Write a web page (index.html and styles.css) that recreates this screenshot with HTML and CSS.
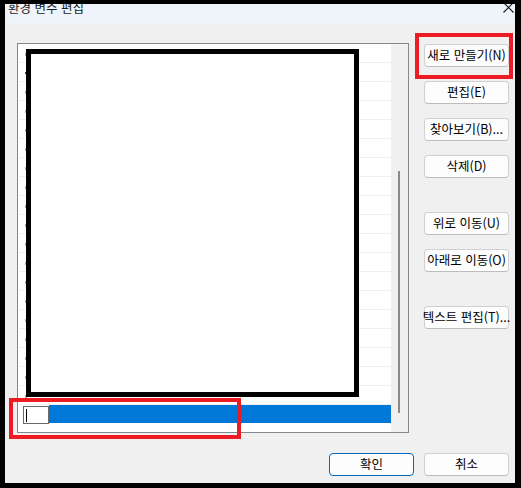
FILE: index.html
```html
<!DOCTYPE html>
<html lang="ko">
<head>
<meta charset="utf-8">
<title>환경 변수 편집</title>
<link rel="stylesheet" href="styles.css">
</head>
<body>
<div class="frame">
  <div class="dialog">
    <div class="titlebar">
      <span class="title">환경 변수 편집</span>
      <svg class="close" width="11" height="11" viewBox="0 0 11 11"><path d="M0.5 0.5 L10.5 10.5 M10.5 0.5 L0.5 10.5" stroke="#1a1a1a" stroke-width="1.1" fill="none"/></svg>
    </div>
    <div class="content">
      <div class="main">
        <div class="listbox">
          <div class="rows">
            <div class="row"><span class="tick"></span></div>
            <div class="row"><span class="tick tick-dark"></span></div>
            <div class="row"><span class="tick"></span></div>
            <div class="row"><span class="tick"></span></div>
            <div class="row"><span class="tick"></span></div>
            <div class="row"><span class="tick"></span></div>
            <div class="row"><span class="tick"></span></div>
            <div class="row"><span class="tick"></span></div>
            <div class="row"><span class="tick"></span></div>
            <div class="row"><span class="tick"></span></div>
            <div class="row"><span class="tick"></span></div>
            <div class="row"><span class="tick"></span></div>
            <div class="row"><span class="tick"></span></div>
            <div class="row"><span class="tick"></span></div>
            <div class="row"><span class="tick"></span></div>
            <div class="row"><span class="tick"></span></div>
            <div class="row"><span class="tick"></span></div>
            <div class="row"><span class="tick"></span></div>
            <div class="row"><span class="tick"></span></div>
            <div class="row row-selected">
              <div class="editbox"><span class="caret"></span></div>
              <div class="selfill"></div>
            </div>
          </div>
          <div class="vscroll"><div class="thumb"></div></div>
        </div>
        <div class="actions">
          <button class="btn">새로 만들기(N)</button>
          <button class="btn">편집(E)</button>
          <button class="btn">찾아보기(B)...</button>
          <button class="btn">삭제(D)</button>
          <button class="btn btn-spaced">위로 이동(U)</button>
          <button class="btn">아래로 이동(O)</button>
          <button class="btn btn-spaced">텍스트 편집(T)...</button>
        </div>
      </div>
      <div class="footer">
        <button class="btn btn-primary">확인</button>
        <button class="btn">취소</button>
      </div>
    </div>
  </div>
</div>
<div class="redact"></div>
<div class="hl hl-new"></div>
<div class="hl hl-edit"></div>
</body>
</html>
```

FILE: styles.css
```css
* { box-sizing: border-box; }
html, body { margin: 0; padding: 0; }
body {
  width: 521px;
  height: 488px;
  background: #000;
  font-family: "Noto Sans CJK KR", "Noto Sans", sans-serif;
  font-size: 12.5px;
  color: #000;
  position: relative;
  overflow: hidden;
}
.frame {
  padding: 4px 6px 5px 5px;
}
.dialog {
  width: 510px;
  height: 479px;
  display: flex;
  flex-direction: column;
}
.titlebar {
  height: 20px;
  background: #eef4f9;
  display: flex;
  justify-content: space-between;
  align-items: flex-start;
  overflow: hidden;
  padding-left: 3px;
  padding-right: 1px;
}
.title {
  line-height: 20px;
  margin-top: -6px;
  color: #1a1a1a;
  font-size: 12.5px;
}
.close {
  margin-top: -2px;
  display: block;
}
.content {
  flex: 1;
  background: #f0f0f0;
  display: flex;
  flex-direction: column;
}
.main {
  display: flex;
  align-items: flex-start;
  gap: 15px;
  padding: 19px 0 0 12px;
}
.listbox {
  width: 392px;
  height: 390px;
  border: 1px solid #828790;
  background: #fff;
  display: flex;
}
.rows {
  flex: 1;
  display: flex;
  flex-direction: column;
}
.row {
  height: 19px;
  margin-left: 1px;
  border-bottom: 1px solid #f0f0f0;
  display: flex;
  align-items: flex-start;
  padding-left: 6px;
}
.tick {
  width: 2px;
  height: 3px;
  margin-top: 9px;
  background: #e0a050;
}
.tick-dark {
  width: 3px;
  height: 2px;
  margin-top: 9px;
  background: #5a3a10;
}
.row-selected {
  height: 19px;
  border-bottom: none;
  padding-left: 4px;
  align-items: stretch;
}
.editbox {
  width: 26px;
  background: #fff;
  border: 1px solid #6a6a6a;
  display: flex;
  align-items: center;
  padding-left: 2px;
  margin-top: 1px;
}
.caret {
  width: 1px;
  height: 13px;
  background: #000;
}
.selfill {
  flex: 1;
  background: #0078d7;
  margin-bottom: 1px;
}
.vscroll {
  width: 17px;
  background: #f0f0f0;
  padding-left: 7px;
}
.thumb {
  width: 2px;
  height: 242px;
  margin-top: 127px;
  background: #8a8a8a;
}
.actions {
  width: 85px;
  display: flex;
  flex-direction: column;
  gap: 14px;
  padding-top: 1px;
}
.btn {
  width: 85px;
  height: 23px;
  padding: 0;
  margin: 0;
  font-family: "Noto Sans CJK KR", "Noto Sans", sans-serif;
  font-size: 12.5px;
  color: #000;
  background: #fdfdfd;
  border: 1px solid #d0d0d0;
  border-bottom-color: #bdbdbd;
  border-radius: 4px;
  display: flex;
  align-items: center;
  justify-content: center;
  white-space: nowrap;
  overflow: visible;
  line-height: 1;
}
.btn-spaced {
  margin-top: 20px;
}
.btn-primary {
  border: 1px solid #0067c0;
}
.footer {
  display: flex;
  justify-content: flex-end;
  gap: 10px;
  padding-right: 6px;
  margin-top: 20px;
}
.redact {
  position: absolute;
  left: 26px;
  top: 49px;
  width: 333px;
  height: 348px;
  border: 5px solid #000;
  background: #fff;
}
.hl {
  position: absolute;
  border: 4px solid #ed1c24;
}
.hl-new {
  left: 415px;
  top: 33px;
  width: 98px;
  height: 46px;
}
.hl-edit {
  left: 9px;
  top: 398px;
  width: 232px;
  height: 41px;
}
```
